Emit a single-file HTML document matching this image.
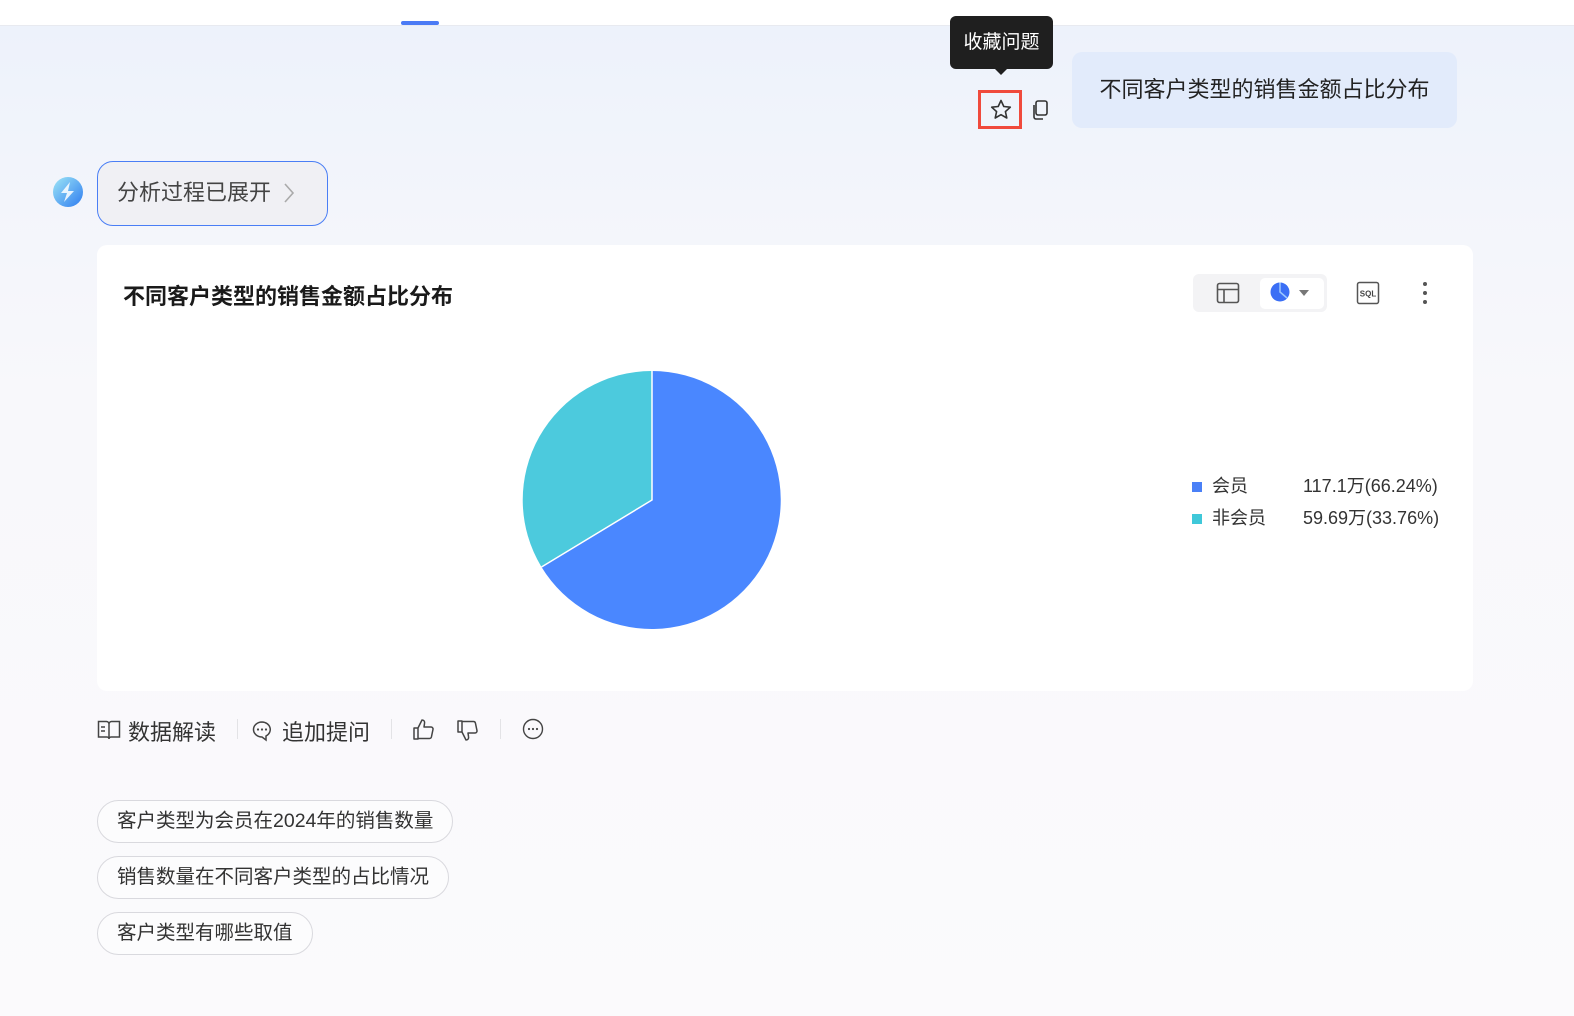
<!DOCTYPE html>
<html><head><meta charset="utf-8"><style>
*{margin:0;padding:0;box-sizing:border-box}
body{width:1574px;height:1016px;overflow:hidden;font-family:"Liberation Sans","Noto Sans CJK SC",sans-serif;color:#333;background:linear-gradient(180deg,#edf2fb 30px,#f3f5fb 200px,#f8f8fb 400px,#fbfafc 1016px);position:relative}
.top{position:absolute;left:0;top:0;width:1574px;height:26px;background:#fff;border-bottom:1px solid #e8eaf0}
.tabline{position:absolute;left:401px;top:21px;width:38px;height:4px;background:#4b7bf5;border-radius:2px}
.a{position:absolute}
.tip{left:950px;top:16px;width:103px;height:53px;background:#1f1f1f;border-radius:6px;color:#fff;font-size:19px;line-height:53px;text-align:center}
.tip:after{content:"";position:absolute;left:45px;bottom:-6px;border:6px solid transparent;border-top-color:#1f1f1f;border-bottom:0}
.q{left:1072px;top:52px;width:385px;height:76px;background:#e2ebfb;border-radius:10px;font-size:22px;line-height:76px;text-align:center;color:#222}
.starbox{left:978px;top:90px;width:44px;height:39px;border:3px solid #f04a3c}
.btn{left:97px;top:161px;width:231px;height:65px;border:1.5px solid #4a7ef5;border-radius:16px;background:#f0f0f4;font-size:22px;color:#444;line-height:62px;padding-left:19px}
.card{left:97px;top:245px;width:1376px;height:446px;background:#fff;border-radius:10px}
.title{left:123px;top:279px;font-size:22px;font-weight:bold;color:#1a1a1a}
.lg{font-size:18px;color:#333}
.chip{position:absolute;left:97px;height:43px;border:1px solid #d9d9de;border-radius:22px;background:#fcfcfd;font-size:19.5px;line-height:41px;padding:0 19px;color:#333}
.act{top:715px;font-size:22px;color:#333}
.sep{top:719px;width:1px;height:20px;background:#e3e3e6}
</style></head><body>
<div class="top"></div><div class="tabline"></div>
<div class="a tip">收藏问题</div>
<div class="a q">不同客户类型的销售金额占比分布</div>
<div class="a starbox"></div>
<svg class="a" style="left:989px;top:98px" width="24" height="24" viewBox="0 0 24 24"><path d="M12 2.5l2.8 6 6.5.7-4.9 4.4 1.4 6.4L12 16.7 6.2 20l1.4-6.4L2.7 9.2l6.5-.7z" fill="none" stroke="#333" stroke-width="1.6" stroke-linejoin="round"/></svg>
<svg class="a" style="left:1030px;top:99px" width="20" height="22" viewBox="0 0 20 22"><rect x="6" y="2" width="11" height="14" rx="2" fill="none" stroke="#333" stroke-width="1.6"/><path d="M4 6v12a2 2 0 0 0 2 2h7" fill="none" stroke="#333" stroke-width="1.6"/></svg>
<svg class="a" style="left:52px;top:176px" width="32" height="32" viewBox="0 0 32 32"><defs><linearGradient id="g" x1="0" y1="0" x2="1" y2="1"><stop offset="0" stop-color="#9ee6f6"/><stop offset="1" stop-color="#2e7cf0"/></linearGradient></defs><circle cx="16" cy="16" r="15" fill="url(#g)"/><path d="M18 6l-9 11h6l-3 9 10-11h-6z" fill="#fff" opacity=".85"/></svg>
<div class="a btn">分析过程已展开</div>
<svg class="a" style="left:283px;top:182px" width="12" height="22" viewBox="0 0 12 22"><path d="M2 2l8 9-8 9" fill="none" stroke="#aaa" stroke-width="1.6"/></svg>
<div class="a card"></div>
<div class="a title">不同客户类型的销售金额占比分布</div>
<div class="a" style="left:1193px;top:274px;width:134px;height:38px;background:#f3f3f5;border-radius:6px"></div>
<div class="a" style="left:1260px;top:278px;width:64px;height:31px;background:#fff;border-radius:5px"></div>
<svg class="a" style="left:1216px;top:282px" width="24" height="22" viewBox="0 0 24 22"><rect x="1.5" y="1.5" width="21" height="19" rx="2" fill="none" stroke="#555" stroke-width="1.6"/><path d="M1.5 7.5h21M8 7.5v13" stroke="#555" stroke-width="1.6"/></svg>
<svg class="a" style="left:1270px;top:282px" width="20" height="20" viewBox="0 0 20 20"><circle cx="10" cy="10" r="9.5" fill="#3b6ff5"/><path d="M10 .5v9.5l7 6" fill="none" stroke="#9cc8ff" stroke-width="1.5"/></svg>
<div class="a" style="left:1299px;top:290px;border:5px solid transparent;border-top:6px solid #777"></div>
<svg class="a" style="left:1356px;top:281px" width="24" height="24" viewBox="0 0 24 24"><rect x="1.5" y="1.5" width="21" height="21" rx="2" fill="none" stroke="#555" stroke-width="1.5"/><text x="12" y="15.5" font-size="8" font-family="Liberation Sans" font-weight="bold" text-anchor="middle" fill="#444">SQL</text></svg>
<svg class="a" style="left:1420px;top:281px" width="10" height="24"><circle cx="5" cy="3" r="2" fill="#555"/><circle cx="5" cy="12" r="2" fill="#555"/><circle cx="5" cy="21" r="2" fill="#555"/></svg>
<svg class="a" style="left:0;top:0" width="1574" height="1016"><path d="M652 500V371A129 129 0 1 1 541.5 567z" fill="#4a87ff"/><path d="M652 500L541.5 567A129 129 0 0 1 652 371z" fill="#4ccadd"/><path d="M652 371V500L541.5 567" fill="none" stroke="#fff" stroke-width="1.5"/></svg>
<div class="a lg" style="left:1192px;top:472px"><span style="display:inline-block;width:10px;height:10px;background:#4a80f7;margin-right:10px"></span>会员</div>
<div class="a lg" style="left:1192px;top:504px"><span style="display:inline-block;width:10px;height:10px;background:#3fc8d9;margin-right:10px"></span>非会员</div>
<div class="a lg" style="left:1303px;top:472px">117.1万(66.24%)</div>
<div class="a lg" style="left:1303px;top:504px">59.69万(33.76%)</div>
<svg class="a" style="left:97px;top:719px" width="24" height="22" viewBox="0 0 24 22"><path d="M1.5 2.5h8a2.5 2.5 0 0 1 2.5 2.5v15a2 2 0 0 0-2-2H1.5zM22.5 2.5h-8a2.5 2.5 0 0 0-2.5 2.5v15a2 2 0 0 1 2-2h8.5z" fill="none" stroke="#444" stroke-width="1.5"/><path d="M4 8h4M4 12h4" stroke="#444" stroke-width="1.5"/></svg>
<div class="a act" style="left:128px">数据解读</div>
<div class="a sep" style="left:237px"></div>
<svg class="a" style="left:251px;top:719px" width="24" height="24" viewBox="0 0 24 24"><path d="M11 3a8.5 7.5 0 1 0 0 15l4 3v-4a8.5 7.5 0 0 0-4-14z" fill="none" stroke="#444" stroke-width="1.5"/><circle cx="7" cy="10.5" r="1.1" fill="#444"/><circle cx="11" cy="10.5" r="1.1" fill="#444"/><circle cx="15" cy="10.5" r="1.1" fill="#444"/></svg>
<div class="a act" style="left:282px">追加提问</div>
<div class="a sep" style="left:391px"></div>
<svg class="a" style="left:412px;top:718px" width="24" height="24" viewBox="0 0 24 24"><path d="M2 10h4v11H2zM6 10l4-8c2 0 3 1.5 2.5 3.5L12 9h7a2 2 0 0 1 2 2.4l-1.6 7.6a2 2 0 0 1-2 1.5H6" fill="none" stroke="#444" stroke-width="1.5" stroke-linejoin="round"/></svg>
<svg class="a" style="left:456px;top:718px" width="24" height="24" viewBox="0 0 24 24"><path d="M2 3h4v11H2zM6 14l4 8c2 0 3-1.5 2.5-3.5L12 15h7a2 2 0 0 0 2-2.4L19.4 5a2 2 0 0 0-2-1.5H6" fill="none" stroke="#444" stroke-width="1.5" stroke-linejoin="round"/></svg>
<div class="a sep" style="left:500px"></div>
<svg class="a" style="left:522px;top:718px" width="22" height="22" viewBox="0 0 22 22"><circle cx="11" cy="11" r="9.5" fill="none" stroke="#444" stroke-width="1.4"/><circle cx="7" cy="11" r="1.1" fill="#444"/><circle cx="11" cy="11" r="1.1" fill="#444"/><circle cx="15" cy="11" r="1.1" fill="#444"/></svg>
<div class="chip" style="top:800px">客户类型为会员在2024年的销售数量</div>
<div class="chip" style="top:856px">销售数量在不同客户类型的占比情况</div>
<div class="chip" style="top:912px">客户类型有哪些取值</div>
</body></html>
